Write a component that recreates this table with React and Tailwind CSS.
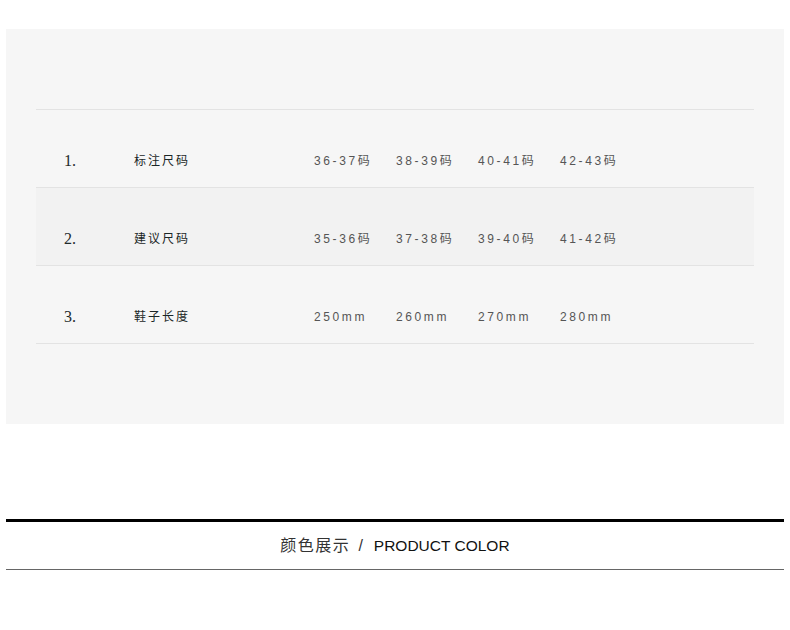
const rows = [
  { no: "1.", label: "标注尺码", values: ["36-37码", "38-39码", "40-41码", "42-43码"], bg: "" },
  { no: "2.", label: "建议尺码", values: ["35-36码", "37-38码", "39-40码", "41-42码"], bg: "bg-[#f2f2f2]" },
  { no: "3.", label: "鞋子长度", values: ["250mm", "260mm", "270mm", "280mm"], bg: "" },
];

const font = { fontFamily: '"Liberation Sans", "Noto Sans CJK SC", sans-serif' };

const App = () => {
  return (
    <div className="w-[790px] h-[630px] bg-white" style={font}>
      <div className="pt-[29px] px-[6px]">
        <div className="bg-[#f6f6f6] px-[30px] pt-[80px] pb-[80px]">
          <div className="border-t border-[#e3e3e3]">
            {rows.map((row) => (
              <div
                key={row.no}
                className={`flex items-center h-[78px] pt-[24px] border-b border-[#e3e3e3] ${row.bg}`}
              >
                <div className="w-[98px] pl-[28px] text-[16px] text-[#1f2b2b] font-['Liberation_Serif']">
                  {row.no}
                </div>
                <div className="w-[180px] text-[12px] tracking-[2px] text-[#1a2626]">{row.label}</div>
                {row.values.map((v) => (
                  <div key={v} className="w-[82px] text-[12px] tracking-[2.6px] text-[#555]">
                    {v}
                  </div>
                ))}
              </div>
            ))}
          </div>
        </div>
      </div>
      <div className="mt-[95px] mx-[6px] border-t-[3px] border-black">
        <div className="h-[47px] flex items-center justify-center">
          <span className="text-[16px] tracking-[1.5px] text-[#333]">颜色展示</span>
          <span className="text-[16px] ml-[8px] mr-[11px] text-[#333]">/</span>
          <span className="text-[15.5px] text-[#111]">PRODUCT COLOR</span>
        </div>
        <div className="border-t border-[#666]"></div>
      </div>
    </div>
  );
};

export default App;
